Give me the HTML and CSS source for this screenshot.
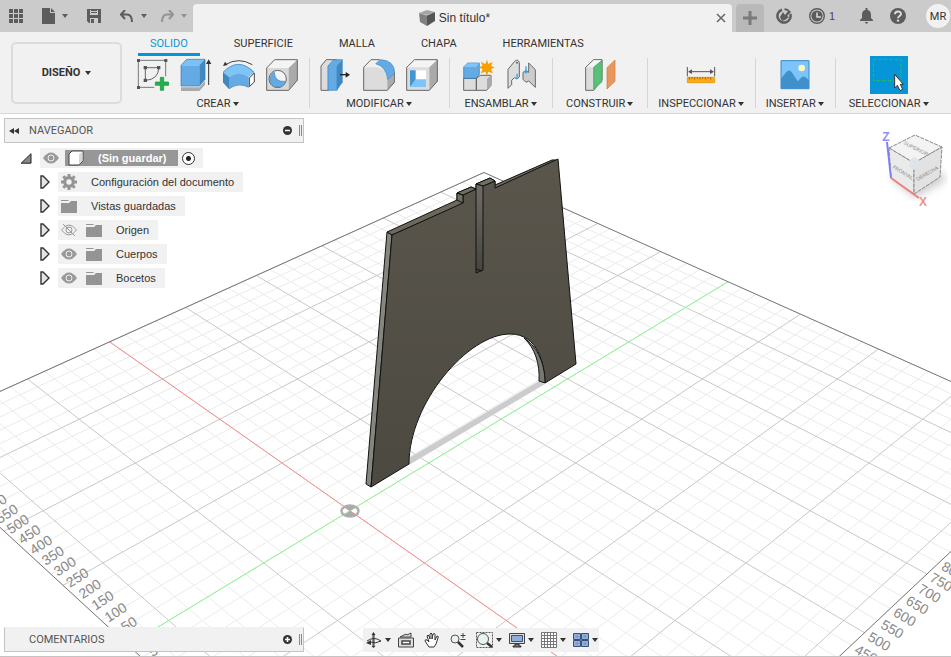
FILE: index.html
```html
<!DOCTYPE html>
<html lang="es">
<head>
<meta charset="UTF-8">
<meta name="viewport" content="width=device-width, initial-scale=1.0">
<title>Sin título*</title>
<link rel="stylesheet" href="styles.css">
</head>
<body>

<header class="topbar">
<div class="quick">
<button class="icon-btn" aria-label="Panel de datos"><svg width="14" height="14" viewBox="0 0 14 14" fill="#5c5c5c"><path d="M0 0h4v4H0zM5 0h4v4H5zM10 0h4v4h-4zM0 5h4v4H0zM5 5h4v4H5zM10 5h4v4h-4zM0 10h4v4H0zM5 10h4v4H5zM10 10h4v4h-4z"/></svg></button>
<button class="icon-btn with-caret file-btn" aria-label="Archivo"><svg width="13" height="16" viewBox="0 0 13 16" fill="#5c5c5c"><path d="M0 0h8v5h5v11H0zM9 0l4 4H9z"/></svg><span class="caret"></span></button>
<button class="icon-btn save-btn" aria-label="Guardar"><svg width="14" height="14" viewBox="0 0 14 14"><path fill="#5c5c5c" d="M0 0h14v14H2l-2-2z"/><path fill="#cbcbcb" d="M3 1h8v5H3zM3 9h8v5H3z"/><path fill="#5c5c5c" d="M4 1h6v1H4zM4 3h6v1H4zM4 10h3v4H4z"/></svg></button>
<button class="icon-btn with-caret" aria-label="Deshacer"><svg width="14" height="13" viewBox="0 0 14 13" fill="none" stroke="#5c5c5c" stroke-width="2"><path d="M5 0L1 4.500L5 9M1 4.500h6q5 0 5 7.500"/></svg><span class="caret"></span></button>
<button class="icon-btn with-caret faded" aria-label="Rehacer"><svg width="14" height="13" viewBox="0 0 14 13" fill="none" stroke="#5c5c5c" stroke-width="2"><path d="M9 0l4 4.500L9 9M13 4.500H7q-5 0-5 7.500"/></svg><span class="caret"></span></button>
</div>
<div class="doc-tab">
<div class="doc-title">
<svg width="16" height="16" viewBox="0 0 16 16"><path fill="#a4a4a4" d="M0 3l8-3 8 2-8 3z"/><path fill="#808080" d="M0 3l8 2.500V16l-7-4z"/><path fill="#555" d="M8 5.500L16 2v9l-8 5z"/></svg>
<span>Sin título*</span>
</div>
<button class="icon-btn" aria-label="Cerrar"><svg width="10" height="10" viewBox="0 0 10 10" stroke="#666" stroke-width="1.500"><path d="M1 1l8 8M9 1L1 9"/></svg></button>
</div>
<button class="new-tab" aria-label="Nuevo diseño"><svg width="14" height="14" viewBox="0 0 14 14" fill="#7a7a7a"><path d="M5.500 0h3v5.500H14v3H8.500V14h-3V8.500H0v-3h5.500z"/></svg></button>
<div class="status">
<button class="icon-btn" aria-label="Extensiones"><svg width="16" height="16" viewBox="0 0 16 16"><path fill="none" stroke="#5c5c5c" stroke-width="2.500" d="M6 1.700A6.600 6.600 0 1 0 14.300 6"/><path fill="none" stroke="#5c5c5c" stroke-width="2" d="M8.500 1.300q2.500 0 4 1.500"/><path fill="#5c5c5c" d="M4 9l3-5 2 3 4-5 2 2-4 4 2 1-4 3-3 1z"/></svg></button>
<button class="icon-btn jobs" aria-label="Trabajos"><svg width="16" height="16" viewBox="0 0 16 16"><circle cx="8" cy="8" r="7.300" fill="none" stroke="#5c5c5c" stroke-width="1.400"/><circle cx="8" cy="8" r="5.600" fill="#5c5c5c"/><path d="M8 4.500V9h4" stroke="#ddd" stroke-width="1.500" fill="none"/></svg><span>1</span></button>
<button class="icon-btn bell" aria-label="Notificaciones"><svg width="13" height="16" viewBox="0 0 13 16" fill="#5c5c5c"><path d="M5.500 0h2v2c3 .5 3.500 3 3.500 5v3l2 2v1H0v-1l2-2V7c0-2 .5-4.500 3.500-5zM4.500 14h4l-2 2z"/></svg></button>
<button class="icon-btn" aria-label="Ayuda"><svg width="16" height="16" viewBox="0 0 16 16"><circle cx="8" cy="8" r="8" fill="#5c5c5c"/><path d="M5 6.300C5 2.500 11 2.600 11 6c0 2-3 2-3 4.300" stroke="#ddd" stroke-width="1.900" fill="none"/><circle cx="8" cy="12.600" r="1.200" fill="#ddd"/></svg></button>
<button class="avatar">MR</button>
</div>
</header>

<section class="ribbon">
<button class="workspace">DISEÑO <span class="caret"></span></button>
<div class="ribbon-main">
<nav class="tabs">
<a href="#solido" class="active">SOLIDO</a>
<a href="#superficie">SUPERFICIE</a>
<a href="#malla">MALLA</a>
<a href="#chapa">CHAPA</a>
<a href="#herramientas">HERRAMIENTAS</a>
</nav>
<div class="groups">

<div class="group">
<div class="tools">
<button aria-label="Crear boceto"><svg width="32" height="34" viewBox="0 0 96 102"><path d="M4 7h82M4 7v81h48M86 7v48" fill="none" stroke="#777" stroke-width="3"/><path d="M25 29v38M25 29h40M66 29q-3 36-40 38" fill="none" stroke="#666" stroke-width="3"/><path fill="#555" d="M0 3h9v9H0zM82 3h9v9h-9zM0 84h9v9H0zM20 24h10v10H20zM60 24h10v10H60zM20 62h10v10H20z"/><path fill="#22b14c" stroke="#159039" stroke-width="2" d="M70 58h10v14h15v10H80v15H70V82H55V72h15z"/></svg></button>
<button aria-label="Extrusión"><svg width="32" height="34" viewBox="0 0 96 102"><path fill="#aaa" d="M3 88l55 0 17-20v12L58 99H3z"/><path fill="#7cc0f5" d="M3 22L20 4h55L58 22z"/><path fill="#64aae4" d="M3 22h55v62H3z"/><path fill="#4088c0" d="M58 22L75 4v60L58 84z"/><path fill="none" stroke="#2e78b2" stroke-width="2" d="M3 84V22L20 4h55v60L58 84z"/><path stroke="#333" stroke-width="3" d="M86 81V14"/><path fill="#333" d="M78 18l8-14 8 14z"/></svg></button>
<button aria-label="Revolución"><svg width="32" height="34" viewBox="0 0 96 102"><path fill="none" stroke="#444" stroke-width="3" d="M7 20Q47-4 88 20"/><path fill="#333" d="M0 24l6-13 8 10z"/><path fill="#80c4f7" d="M0 43q46-48 95 0L77 57Q47 39 18 57z"/><path fill="#64aae4" d="M18 57q30-20 59 0v31q-29-18-59 4z"/><path fill="#4088c0" d="M0 43l18 14v35L0 72z"/><path fill="#fff" stroke="#444" stroke-width="3" d="M79 60l15-15v27L79 86z"/><path fill="none" stroke="#2e78b2" stroke-width="2" d="M0 43q46-48 93 0M0 43v29l18 20q30-20 59-4"/></svg></button>
<button aria-label="Agujero"><svg width="32" height="34" viewBox="0 0 96 102"><path fill="#f4f4f4" d="M2 30L26 5h68L68 30z"/><path fill="#d9d9d9" d="M2 30h66v67H2z"/><path fill="#aaa" d="M68 30L94 5v62L68 97z"/><path fill="none" stroke="#666" stroke-width="3" d="M2 97V30L26 5h68v62L68 97z"/><circle cx="35" cy="63" r="26" fill="#f4f4f4" stroke="#666" stroke-width="3"/><path fill="#64aae4" stroke="#3a86c2" stroke-width="2" d="M25 43q1 30 32 27a23 23 0 1 1-32-27z"/></svg></button>
</div>
<button class="group-name">CREAR<span class="caret"></span></button>
</div>

<div class="group">
<div class="tools">
<button aria-label="Pulsar/tirar"><svg width="32" height="34" viewBox="0 0 96 102"><path fill="#dcdcdc" stroke="#666" stroke-width="3" d="M3 97V24L19 5h30L25 24v73z"/><path fill="#64aae4" stroke="#3a86c2" stroke-width="2" d="M24 24L41 5h27L51 24v73H24z"/><path fill="#4088c0" d="M51 24L68 5v68L51 97z"/><path stroke="#222" stroke-width="4" d="M60 50h20"/><path fill="#222" d="M77 42l13 8-13 9z"/></svg></button>
<button aria-label="Empalme"><svg width="32" height="34" viewBox="0 0 96 102"><path fill="#f0f0f0" d="M2 28L24 5h26L38 28z"/><path fill="#dcdcdc" d="M2 28h34q35 2 37 36v33H2z"/><path fill="#aaa" d="M73 64l22-22v30L73 97z"/><path fill="none" stroke="#666" stroke-width="3" d="M2 97V28L24 5h26M2 97h71l22-25V42"/><path fill="#64aae4" stroke="#3a86c2" stroke-width="2" d="M38 17L52 5q43 2 43 41L74 64Q71 27 38 17z"/></svg></button>
<button aria-label="Vaciado"><svg width="32" height="34" viewBox="0 0 96 102"><path fill="#f4f4f4" d="M2 28L26 5h68L70 28z"/><path fill="#dcdcdc" d="M2 28h68v69H2z"/><path fill="#aaa" d="M70 28L94 5v65L70 97z"/><path fill="none" stroke="#666" stroke-width="3" d="M2 97V28L26 5h68v65L70 97z"/><path fill="#fff" d="M12 37h48v51H12z"/><path fill="#4496d2" d="M12 37h17v29L12 88z"/><path fill="#80c4f7" d="M12 88l17-24h31v24z"/></svg></button>
</div>
<button class="group-name">MODIFICAR<span class="caret"></span></button>
</div>

<div class="group roomy">
<div class="tools">
<button aria-label="Nuevo componente"><svg width="32" height="34" viewBox="0 0 96 102"><path fill="#dcdcdc" stroke="#666" stroke-width="3" d="M2 61h38v36H2zM40 61l12-9h32v30L71 97H40z"/><path fill="#aaa" d="M72 63l12-11v30L72 95z"/><path fill="#64aae4" stroke="#2e78b2" stroke-width="2" d="M2 27l12-12h35v34L39 61H2z"/><path fill="#80c4f7" d="M2 27l12-11h35L39 27z"/><path fill="#f5a000" d="M72 5l4 13 13-7-5 13 11 4-11 6 6 12-14-5-4 12-5-12-14 5 6-12-11-6 11-5-6-12 14 7z"/></svg></button>
<button aria-label="Unión"><svg width="32" height="34" viewBox="0 0 96 102"><path fill="#ddd" stroke="#666" stroke-width="3" d="M6 91V34L26 10q10-9 14 4v43l-7 6-8-4-8 8v13z"/><circle cx="33" cy="14" r="3" fill="#666"/><path stroke="#36a0e5" stroke-width="4" d="M33 47v16M60 25v20"/><path fill="#ccc" stroke="#666" stroke-width="3" d="M51 43q9-8 17 0V15l20 20v53L68 69l-8 4-9-9z"/><path fill="#36a0e5" d="M53 38h14l-7 10z"/></svg></button>
</div>
<button class="group-name">ENSAMBLAR<span class="caret"></span></button>
</div>

<div class="group roomy">
<div class="tools">
<button aria-label="Plano de desfase"><svg width="32" height="34" viewBox="0 0 96 102"><path fill="#dcdcdc" stroke="#666" stroke-width="3" d="M5 97V28L29 5h25v60L29 97z"/><path fill="#f4f4f4" d="M7 28L30 7h22L29 28z"/><path fill="#58c078" stroke="#38a35b" stroke-width="2" d="M29 28L54 7v64L29 94z"/><path fill="#e8955e" stroke="#ce7a43" stroke-width="2" d="M69 29L93 6v64L69 93z"/></svg></button>
</div>
<button class="group-name">CONSTRUIR<span class="caret"></span></button>
</div>

<div class="group">
<div class="tools">
<button aria-label="Medir"><svg width="32" height="34" viewBox="0 0 96 102"><path stroke="#555" stroke-width="3" d="M7 27v28M89 27v28M14 41h68"/><path fill="#555" d="M9 41l12-7v14zM87 41l-12-7v14z"/><path fill="#ffaa12" stroke="#e08d00" stroke-width="2" d="M7 58h82v16H7z"/><path stroke="#795315" stroke-width="2" d="M13 57v8M21 57v6M29 57v8M37 57v6M45 57v8M53 57v6M61 57v8M69 57v6M77 57v8"/></svg></button>
</div>
<button class="group-name">INSPECCIONAR<span class="caret"></span></button>
</div>

<div class="group">
<div class="tools">
<button aria-label="Insertar imagen"><svg width="32" height="34" viewBox="0 0 96 102"><path fill="#7cc4fa" stroke="#3a8cc8" stroke-width="3" d="M6 8h84v84H6z"/><path fill="#4090cb" d="M6 62l16-20q8-9 16 0l18 28 12-12q6-5 12 0l10 9v25H6z"/><circle cx="68" cy="30" r="10" fill="#fff6bf"/></svg></button>
</div>
<button class="group-name">INSERTAR<span class="caret"></span></button>
</div>

<div class="group roomy">
<div class="tools">
<button class="selected" aria-label="Seleccionar"><svg width="38" height="38" viewBox="0 0 114 114"><path fill="none" stroke="#22c04e" stroke-width="3" stroke-dasharray="11 5" d="M10 10h83v64H10z"/><path fill="#fff" stroke="#333" stroke-width="3" d="M74 55v41l8-8 8 16 8-4-7-15h9z"/></svg></button>
</div>
<button class="group-name">SELECCIONAR<span class="caret"></span></button>
</div>

</div>
</div>
</section>

<main class="viewport">
<svg class="scene" viewBox="0 114 951 542" preserveAspectRatio="xMidYMid slice" aria-hidden="true">
<defs>
<linearGradient id="face" x1="0" y1="0" x2="0" y2="1"><stop offset="0" stop-color="#5a564c"/><stop offset="1" stop-color="#4c4941"/></linearGradient>
<linearGradient id="slot" x1="0" y1="0" x2="0" y2="1"><stop offset="0" stop-color="#6f6d66"/><stop offset="1" stop-color="#45433d"/></linearGradient>
</defs>
<g id="grid"></g>
<ellipse cx="350" cy="511" rx="8.500" ry="5.500" fill="none" stroke="#b0b0b0" stroke-width="2.500"/>
<path fill="#aaa" d="M350 511l-6-4q6-3 12 0zM350 511l-6 4q6 3 12 0z"/>
<path class="shadow" d="M409 458L539 381l6 3L409 465z"/>
<g stroke="#111" stroke-width="1" stroke-linejoin="round">
<path fill="#85877f" d="M387 232l5 3-21 252-5-3z"/>
<path fill="#6c685c" d="M387 232l70-32v-7l14-6 5 2v-5l14-6 5 3v4l57-25q4-1 6 2L392 235z"/>
<path fill="url(#face)" d="M392 235l71-32v-8l13-6 7-3 12-5v7l63-29 18 205-31 19c-1-18-6-49-35-49-42 0-101 69-101 130l-38 23z"/>
<path fill="#716e63" d="M457 193l6 2v8l-6-3zM457 193l14-6 5 2-13 6zM476 184l14-6 5 3-12 5z"/>
<path fill="url(#slot)" d="M476 184l7 2v84l-7 3z"/>
<path fill="#777970" d="M524 338c11 7 21 22 21 45l-6-2c1-17-4-33-15-43z"/>
<path fill="none" d="M476 269l6 2"/>
</g>
</svg>

<svg class="viewcube" width="72" height="84" viewBox="876 126 72 84" role="img" aria-label="ViewCube">
<defs><filter id="soft"><feGaussianBlur stdDeviation="4"/></filter></defs>
<path fill="#ccc" filter="url(#soft)" d="M891 178l24 20 31-18-5-8-40-2z"/>
<g stroke="#888" stroke-width="1" stroke-dasharray="4 1">
<path fill="#f3f3f3" d="M889 148l26-13 27 12-28 16z"/>
<path fill="#eaeaea" d="M889 148l25 15v31l-23-16z"/>
<path fill="#e2e2e2" d="M914 163l28-16-2 30-26 17z"/>
</g>
<path fill="#dfe3ea" d="M910 160l4-3 5 3v7l-5 3-5-3z"/>
<path stroke="#8080f0" stroke-width="2" d="M887 142l4 36"/>
<path stroke="#f08080" stroke-width="2" d="M891 178l28 20"/>
<g class="cube-text">
<text transform="translate(915 150) rotate(27)">SUPERIOR</text>
<text transform="translate(902 174) rotate(32)">FRONTAL</text>
<text transform="translate(928 175) rotate(-30)">DERECHA</text>
</g>
<text class="axis-z" x="886" y="141">Z</text>
<text class="axis-x" x="923" y="206">X</text>
</svg>

<aside class="browser">
<div class="panel">
<button class="icon-btn" aria-label="Contraer"><svg width="10" height="6" viewBox="0 0 10 6" fill="#333"><path d="M5 0v6L0 3zM10 0v6L5 3z"/></svg></button>
<h2>NAVEGADOR</h2>
<button class="icon-btn" aria-label="Ocultar"><svg width="9" height="9" viewBox="0 0 9 9"><circle cx="4.500" cy="4.500" r="4.500" fill="#333"/><path stroke="#fff" stroke-width="1.500" d="M2 4.500h5"/></svg></button>
<span class="grip"></span>
</div>
<ul class="tree">
<li class="root">
<svg class="twist" width="12" height="11" viewBox="0 0 12 11"><path fill="#888" stroke="#222" d="M11 .7v9.500H1.200z"/></svg>
<div class="node">
<svg class="eye" width="16" height="12" viewBox="0 0 16 12"><path fill="#999" d="M0 6q8-11 16 0-8 11-16 0z"/><circle cx="8" cy="6" r="3" fill="none" stroke="#f1f1f1"/></svg>
<span class="doc-name"><svg width="16" height="16" viewBox="0 0 16 16"><path fill="#fff" stroke="#444" d="M1 4l3-3h11v10l-4 4H1z"/><path fill="#d2d7de" d="M11 4.500l3.500-3V11L11 14.500z"/></svg><span>(Sin guardar)</span></span>
<input type="radio" checked aria-label="Activar componente">
</div>
</li>
<li>
<svg class="twist" width="10" height="14" viewBox="0 0 10 14"><path fill="#e4e4e4" stroke="#333" stroke-width="1.400" d="M1 1h2l6 6-6 6H1z"/></svg>
<div class="node">
<svg width="16" height="16" viewBox="0 0 16 16"><circle cx="8" cy="8" r="4.300" fill="none" stroke="#949494" stroke-width="3.200"/><path stroke="#949494" stroke-width="3" d="M8 0v3M8 13v3M0 8h3M13 8h3M2.300 2.300l2 2M11.700 11.700l2 2M13.700 2.300l-2 2M4.300 11.700l-2 2"/></svg>
<span>Configuración del documento</span>
</div>
</li>
<li>
<svg class="twist" width="10" height="14" viewBox="0 0 10 14"><path fill="#e4e4e4" stroke="#333" stroke-width="1.400" d="M1 1h2l6 6-6 6H1z"/></svg>
<div class="node">
<svg width="16" height="13" viewBox="0 0 16 13" fill="#949494"><path d="M0 0h7l1 1H0zM0 3h8l2-2h6v12H0z"/></svg>
<span>Vistas guardadas</span>
</div>
</li>
<li>
<svg class="twist" width="10" height="14" viewBox="0 0 10 14"><path fill="#e4e4e4" stroke="#333" stroke-width="1.400" d="M1 1h2l6 6-6 6H1z"/></svg>
<div class="node">
<svg class="eye" width="16" height="12" viewBox="0 0 16 12" fill="none" stroke="#999"><path d="M.5 6q7.500-10 15 0-7.500 10-15 0zM2 0l12 12"/><circle cx="8" cy="6" r="3"/></svg>
<svg width="16" height="13" viewBox="0 0 16 13" fill="#949494"><path d="M0 0h7l1 1H0zM0 3h8l2-2h6v12H0z"/></svg>
<span>Origen</span>
</div>
</li>
<li>
<svg class="twist" width="10" height="14" viewBox="0 0 10 14"><path fill="#e4e4e4" stroke="#333" stroke-width="1.400" d="M1 1h2l6 6-6 6H1z"/></svg>
<div class="node">
<svg class="eye" width="16" height="12" viewBox="0 0 16 12"><path fill="#999" d="M0 6q8-11 16 0-8 11-16 0z"/><circle cx="8" cy="6" r="3" fill="none" stroke="#f1f1f1"/></svg>
<svg width="16" height="13" viewBox="0 0 16 13" fill="#949494"><path d="M0 0h7l1 1H0zM0 3h8l2-2h6v12H0z"/></svg>
<span>Cuerpos</span>
</div>
</li>
<li>
<svg class="twist" width="10" height="14" viewBox="0 0 10 14"><path fill="#e4e4e4" stroke="#333" stroke-width="1.400" d="M1 1h2l6 6-6 6H1z"/></svg>
<div class="node">
<svg class="eye" width="16" height="12" viewBox="0 0 16 12"><path fill="#999" d="M0 6q8-11 16 0-8 11-16 0z"/><circle cx="8" cy="6" r="3" fill="none" stroke="#f1f1f1"/></svg>
<svg width="16" height="13" viewBox="0 0 16 13" fill="#949494"><path d="M0 0h7l1 1H0zM0 3h8l2-2h6v12H0z"/></svg>
<span>Bocetos</span>
</div>
</li>
</ul>
</aside>

<footer class="bottom">
<div class="panel comments">
<h2>COMENTARIOS</h2>
<button class="icon-btn" aria-label="Añadir comentario"><svg width="9" height="9" viewBox="0 0 9 9"><circle cx="4.500" cy="4.500" r="4.500" fill="#333"/><path stroke="#fff" stroke-width="1.500" d="M2 4.500h5M4.500 2v5"/></svg></button>
<span class="grip"></span>
</div>
<div class="navbar">
<button class="icon-btn with-caret" aria-label="Órbita"><svg width="16" height="16" viewBox="0 0 16 16" fill="none" stroke="#333"><path d="M1 9q7-5 14 0-5 3-11 1M8 2v12M7 3v11"/><path fill="#333" d="M7.500 0l2 3h-4zM7.500 16l2-2h-4zM0 11l5-3v5z" stroke="none"/></svg><span class="caret"></span></button>
<button class="icon-btn" aria-label="Mirar a"><svg width="16" height="16" viewBox="0 0 16 16" fill="#ddd" stroke="#444"><path d="M2 5l6-3 1 1 4-2v4zM.5 6h15v9H.5z"/><path fill="#fff" stroke-width="1.500" d="M4 9h8v3H4z"/></svg></button>
<button class="icon-btn" aria-label="Encuadre"><svg width="16" height="16" viewBox="0 0 16 16"><path fill="#fff" stroke="#333" d="M5 15L1 9q0-2 2-1l2 2-2-6q1-2 2 0l1 3V2q1-2 2 0v5l1-5q2-1 2 0v6l2-4q2 0 1 2l-2 6-2 3z"/></svg></button>
<button class="icon-btn" aria-label="Zoom"><svg width="16" height="16" viewBox="0 0 16 16"><circle cx="5" cy="7" r="4" fill="#e8f2f2" stroke="#555"/><path stroke="#333" stroke-width="2.500" d="M8 10l5 5"/><path stroke="#444" d="M13 1v5M10.500 3.500h5M10.500 7.500h5"/></svg></button>
<button class="icon-btn with-caret" aria-label="Ajustar"><svg width="17" height="16" viewBox="0 0 17 16"><path fill="none" stroke="#555" stroke-dasharray="2 1" d="M.5.500h16v15H.5z"/><circle cx="7" cy="7" r="5.500" fill="#e8f2f2" stroke="#555"/><path stroke="#333" stroke-width="2.500" d="M11 11l5 4"/></svg><span class="caret"></span></button>
<button class="icon-btn with-caret" aria-label="Visualización"><svg width="16" height="16" viewBox="0 0 16 16"><path fill="#ddd" stroke="#444" d="M.5 1.500h15v10H.5z"/><path fill="#91aedb" stroke="#345487" d="M2.500 3.500h11v6h-11z"/><path fill="#777" stroke="#333" d="M6 12h4v2h2v1H4v-1h2z"/></svg><span class="caret"></span></button>
<button class="icon-btn with-caret" aria-label="Rejilla"><svg width="16" height="16" viewBox="0 0 16 16" fill="#fff" stroke="#777"><path d="M.5.500h15v15H.5zM3.500 0v16M6.500 0v16M9.500 0v16M12.500 0v16M0 3.500h16M0 6.500h16M0 9.500h16M0 12.500h16"/></svg><span class="caret"></span></button>
<button class="icon-btn with-caret" aria-label="Ventanas gráficas"><svg width="16" height="14" viewBox="0 0 16 14" fill="#91aedb" stroke="#3a5077"><path d="M.5.500h7v6h-7zM8.500.500h7v6h-7zM.5 7.500h7v6h-7zM8.500 7.500h7v6h-7z"/><path fill="#c9d8ef" stroke="#7591c0" d="M3 3h2v1H3zM11 3h2v1h-2zM3 10h2v1H3zM11 10h2v1h-2z"/></svg><span class="caret"></span></button>
</div>
</footer>
</main>

<script src="grid.js"></script>
</body>
</html>
```
FILE: styles.css
```css
* {
    box-sizing: border-box;
}

body {
    margin: 0;
    height: 100vh;
    display: flex;
    flex-direction: column;
    overflow: hidden;
    font-family: "Liberation Sans", Arial, sans-serif;
    font-size: 11px;
    color: #333;
    background: #fff;
}

button {
    border: none;
    background: none;
    padding: 0;
    margin: 0;
    color: inherit;
    font: inherit;
}

svg {
    display: block;
    flex: none;
}

.icon-btn {
    display: flex;
    align-items: center;
}

.with-caret {
    gap: 7px;
}

.caret {
    display: inline-block;
    border: 3px solid transparent;
    border-top: 4px solid #333;
    border-bottom: 0;
}

/* top bar */

.topbar {
    display: flex;
    align-items: flex-end;
    height: 32px;
    flex: none;
    background: #cbcbcb;
}

.quick {
    display: flex;
    align-items: center;
    width: 193px;
    height: 32px;
    padding-left: 9px;
    gap: 13px;
}

.quick .caret {
    border-top-color: #5c5c5c;
}

.file-btn {
    margin-left: 6px;
}

.save-btn {
    margin: 0 6px;
}

.faded {
    opacity: 0.5;
}

.doc-tab {
    display: flex;
    align-items: center;
    flex: 1;
    height: 28px;
    padding-right: 6px;
    background: #f1f1f1;
    border-radius: 4px 4px 0 0;
}

.doc-title {
    display: flex;
    flex: 1;
    align-items: center;
    justify-content: center;
    gap: 4px;
    font-size: 12px;
}

.new-tab {
    display: flex;
    align-items: center;
    justify-content: center;
    width: 28px;
    height: 28px;
    margin-left: 4px;
    background: #b9b9b9;
    border-radius: 4px 4px 0 0;
}

.status {
    display: flex;
    align-items: center;
    gap: 17px;
    height: 32px;
    padding-left: 12px;
}

.jobs {
    gap: 4px;
    color: #5a3a5a;
}

.bell {
    margin-left: 8px;
}

.avatar {
    width: 24px;
    height: 24px;
    margin-left: 3px;
    margin-right: 1px;
    border-radius: 50%;
    background: #f1f1f1;
    font-family: Roboto, sans-serif;
}

/* ribbon */

.ribbon {
    display: flex;
    flex: none;
    height: 82px;
    padding-left: 11px;
    background: #f1f1f1;
    border-bottom: 1px solid #d8d8d8;
    font-family: Roboto, sans-serif;
    line-height: 12px;
    white-space: nowrap;
}

.workspace {
    display: flex;
    align-items: center;
    justify-content: center;
    gap: 5px;
    width: 111px;
    height: 62px;
    margin-top: 10px;
    border: 2px solid #dcdcdc;
    border-radius: 5px;
    font-weight: bold;
}

.ribbon-main {
    flex: 1;
    margin-left: 4px;
}

.tabs {
    display: flex;
    gap: 22px;
    height: 24px;
    padding-left: 12px;
}

.tabs a {
    padding: 6px 12px 3px;
    color: #333;
    text-decoration: none;
    border-bottom: 3px solid transparent;
}

.tabs .active {
    color: #0696d7;
    border-bottom-color: #0696d7;
}

.groups {
    display: flex;
}

.group {
    display: flex;
    flex-direction: column;
    align-items: center;
    padding: 0 11px;
    position: relative;
}

.roomy {
    padding: 0 14px;
}

.group + .group::before {
    content: "";
    position: absolute;
    left: 0;
    top: 2px;
    width: 1px;
    height: 50px;
    background: #d6d6d6;
}

.tools {
    display: flex;
    align-items: center;
    gap: 11px;
    height: 38px;
}

.selected {
    background: #0696d7;
}

.group-name {
    display: flex;
    align-items: center;
    gap: 2px;
    margin-top: 4px;
}

/* viewport */

.viewport {
    position: relative;
    display: flex;
    flex: 1;
    flex-direction: column;
    justify-content: space-between;
    min-height: 0;
    padding: 4px;
    border-bottom: 1px solid #c4c4c4;
}

.scene {
    position: absolute;
    inset: 0;
    width: 100%;
    height: 100%;
}

.minor {
    stroke: #ebebeb;
}

.major {
    stroke: #c8c8c8;
}

.edge {
    stroke: #777;
}

.axis-red {
    stroke: #ff9090;
}

.axis-green {
    stroke: #90ff90;
}

.scale {
    font-size: 14px;
    fill: #888;
    text-anchor: middle;
}

.shadow {
    fill: #ccc;
}

.viewcube {
    position: absolute;
    top: 12px;
    right: 3px;
}

.cube-text {
    font-size: 5px;
    fill: #888;
    text-anchor: middle;
}

.axis-z, .axis-x {
    font-size: 12px;
    font-weight: bold;
    text-anchor: middle;
    fill: #9090f0;
}

.axis-x {
    fill: #f09090;
}

.browser, .bottom {
    position: relative;
}

.panel {
    display: flex;
    align-items: center;
    width: 300px;
    height: 25px;
    padding: 0 1px 0 4px;
    background: #f1f1f1;
    border: 1px solid #c4c4c4;
}

.panel h2 {
    flex: 1;
    margin: 0 0 0 10px;
    font-family: Roboto, sans-serif;
    font-size: 11px;
    font-weight: normal;
    color: #555;
}

.grip {
    width: 3px;
    height: 11px;
    margin-left: 7px;
    border-left: 1px solid #888;
    border-right: 1px solid #888;
}

.tree {
    margin: 5px 0 0;
    padding: 0;
    list-style: none;
}

.tree li {
    display: flex;
    align-items: center;
    gap: 8px;
    margin-bottom: 4px;
    padding-left: 36px;
}

.tree .root {
    padding-left: 16px;
}

.node {
    display: flex;
    align-items: center;
    height: 20px;
    padding: 0 9px 0 3px;
    gap: 14px;
    background: #f1f1f1;
}

.node .eye {
    margin-right: -5px;
}

.doc-name {
    display: flex;
    align-items: center;
    gap: 14px;
    height: 16px;
    padding: 0 12px 0 3px;
    background: #979797;
    color: #fff;
    font-weight: bold;
}

.root .node {
    padding-right: 8px;
    gap: 4px;
}

.root .eye {
    margin-right: 2px;
}

.root input {
    appearance: none;
    width: 13px;
    height: 13px;
    margin: 0;
    border: 1px solid #333;
    border-radius: 50%;
    background: radial-gradient(circle, #222 2px, #fff 3px);
}

.bottom {
    display: flex;
    align-items: flex-end;
    gap: 59px;
}

.comments {
    padding-left: 14px;
    border-top-color: #f1f1f1;
}

.navbar {
    display: flex;
    align-items: center;
    gap: 10px;
    height: 24px;
    padding: 0 4px 0 3px;
    background: #f1f1f1;
}

.navbar .with-caret {
    gap: 3px;
    margin-right: -3px;
}
```
FILE: grid.js
```js
const NS = "http://www.w3.org/2000/svg";
const grid = document.getElementById("grid");

// floor extents, one unit = 250 mm
const U0 = -4, U1 = 4.2, V0 = -2.4, V1 = 5.8;

// floor position to screen position
function project(u, v) {
    const d = v - u;
    const w = 1 + 0.0455 * d;
    return [(350 + 153.4 * u + 98.3 * d) / w, 510.7 - 49.9 * d / w];
}

function line(a, b, cls) {
    const el = document.createElementNS(NS, "line");
    el.setAttribute("x1", a[0]);
    el.setAttribute("y1", a[1]);
    el.setAttribute("x2", b[0]);
    el.setAttribute("y2", b[1]);
    el.setAttribute("class", cls);
    grid.appendChild(el);
}

function label(value, u, v, angle) {
    const p = project(u, v);
    const el = document.createElementNS(NS, "text");
    el.setAttribute("transform", `translate(${p[0]} ${p[1]}) rotate(${angle})`);
    el.setAttribute("dy", 5);
    el.setAttribute("class", "scale");
    el.textContent = value;
    grid.appendChild(el);
}

function lines(major) {
    const cls = major ? "major" : "minor";
    for (let i = -20; i <= 21; i++) {
        if ((i % 5 === 0) === major) line(project(i / 5, V0), project(i / 5, V1), cls);
    }
    for (let i = -12; i <= 29; i++) {
        if ((i % 5 === 0) === major) line(project(U0, i / 5), project(U1, i / 5), cls);
    }
}

lines(false);
lines(true);

line(project(U0, 0), project(U1, 0), "axis-red");
line(project(0, V0), project(0, V1), "axis-green");

line(project(U0, V0), project(U0, V1), "edge");
line(project(U0, V1), project(U1, V1), "edge");
line(project(U1, V1), project(U1, V0), "edge");
line(project(U1, V0), project(U0, V0), "edge");

for (let i = 1; i <= 12; i++) label(i * 50, -i / 5, -2.26, -33);
label(50, 0.2, -2.26, -33);
for (let i = 9; i <= 16; i++) label(i * 50, 4.34, i / 5, 30);
```
